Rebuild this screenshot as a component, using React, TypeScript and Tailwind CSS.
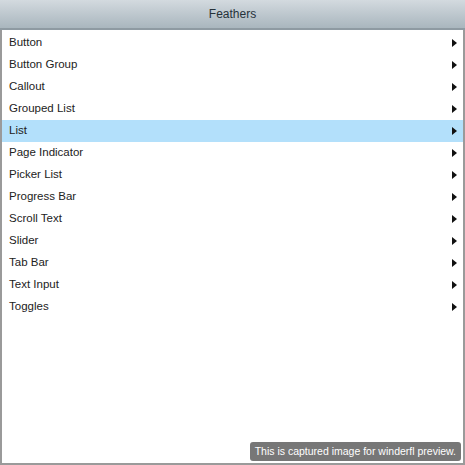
import React from 'react';

const items = [
  'Button',
  'Button Group',
  'Callout',
  'Grouped List',
  'List',
  'Page Indicator',
  'Picker List',
  'Progress Bar',
  'Scroll Text',
  'Slider',
  'Tab Bar',
  'Text Input',
  'Toggles',
];

export default function App() {
  return (
    <div className="relative flex h-[465px] w-[465px] flex-col overflow-hidden bg-white font-['Liberation_Sans',Arial,sans-serif]">
      {/* Header */}
      <div className="flex h-[30px] shrink-0 items-center justify-center border-b-2 border-[#8e9aa2] bg-gradient-to-b from-[#d3dadf] to-[#a9b6be] text-[12px] text-[#26323a]">
        Feathers
      </div>

      {/* List */}
      <div className="flex flex-1 flex-col border-x-2 border-b-2 border-[#9a9a9a] pt-[2px]">
        {items.map((label) => (
          <div
            key={label}
            className={`flex h-[22px] items-center justify-between pl-[7px] pr-[6px] text-[11.5px] text-[#222] ${
              label === 'List' ? 'bg-[#b3e0fb]' : ''
            }`}
          >
            <span>{label}</span>
            <svg width="5" height="8" viewBox="0 0 5 8">
              <path d="M0 0 L5 4 L0 8 Z" fill="#111" />
            </svg>
          </div>
        ))}
      </div>

      {/* Preview notice */}
      <div className="absolute bottom-[4px] right-[4px] rounded-[3px] bg-[#777] px-[5px] py-[3px] text-[10.5px] leading-[13px] text-white">
        This is captured image for winderfl preview.
      </div>
    </div>
  );
}
